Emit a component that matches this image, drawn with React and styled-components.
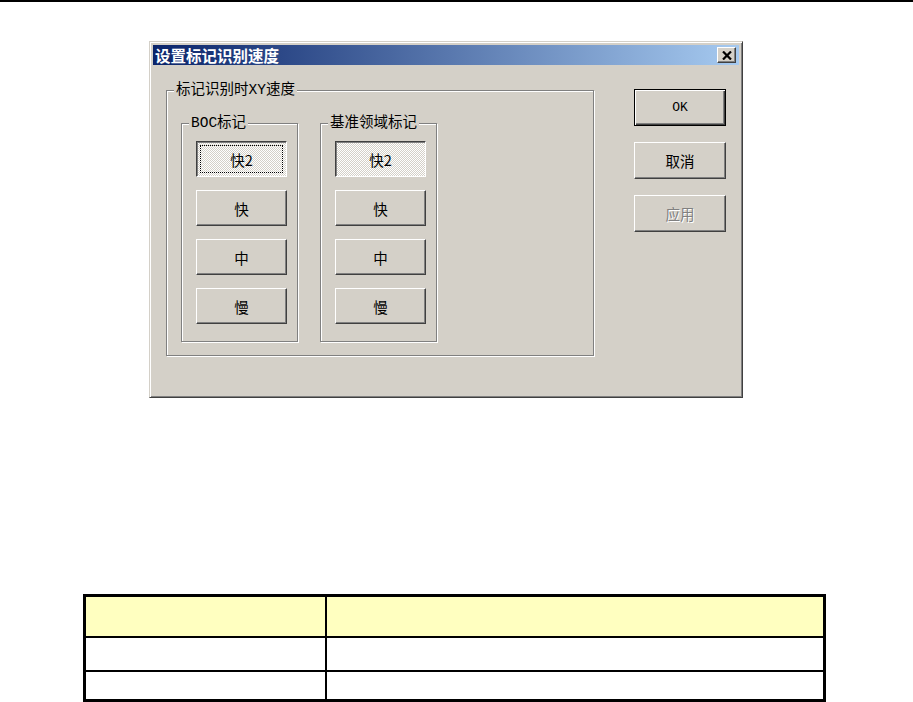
import React from 'react';
import styled, { createGlobalStyle, css } from 'styled-components';

const GlobalStyle = createGlobalStyle`
  html, body {
    margin: 0;
    padding: 0;
    background: #ffffff;
  }
  body {
    font-family: "Noto Sans CJK SC", "Liberation Sans", sans-serif;
  }
`;

const Page = styled.div`
  width: 913px;
  height: 702px;
  overflow: hidden;
  display: flex;
  flex-direction: column;
`;

const TopRule = styled.div`
  height: 2px;
  background: #000;
`;

const Dialog = styled.div`
  box-sizing: border-box;
  width: 594px;
  height: 357px;
  margin: 39px 0 0 149px;
  padding: 2px;
  background: #d4d0c8;
  border: 1px solid;
  border-color: #d4d0c8 #404040 #404040 #d4d0c8;
  box-shadow: inset 1px 1px 0 #ffffff, inset -1px -1px 0 #808080;
  display: flex;
  flex-direction: column;
`;

const TitleBar = styled.div`
  height: 20px;
  margin: 1px;
  display: flex;
  align-items: center;
  justify-content: space-between;
  padding: 0 3px 0 2px;
  background: linear-gradient(to right, #0a246a, #a6caf0);
`;

const Title = styled.span`
  color: #ffffff;
  font-weight: bold;
  font-size: 15.5px;
  line-height: 20px;
`;

const bevel = css`
  box-sizing: border-box;
  background: #d4d0c8;
  border: 1px solid;
  border-color: #ffffff #404040 #404040 #ffffff;
  box-shadow: inset -1px -1px 0 #808080;
`;

const CloseBox = styled.div`
  ${bevel};
  width: 19px;
  height: 16px;
  display: flex;
  align-items: center;
  justify-content: center;
`;

const Body = styled.div`
  display: flex;
  padding: 24px 0 0 14px;
  gap: 40px;
`;

const Group = styled.div`
  position: relative;
  box-sizing: border-box;
  width: ${p => p.$w}px;
  height: ${p => p.$h}px;
  padding: ${p => p.$pad};
  border: 1px solid #808080;
  box-shadow: inset 1px 1px 0 #ffffff, 1px 1px 0 #ffffff;
  display: flex;
  gap: ${p => p.$gap || 0}px;
`;

const Caption = styled.span`
  position: absolute;
  top: -10px;
  left: 7px;
  padding: 0 2px;
  background: #d4d0c8;
  color: #000;
  font-family: "Liberation Mono", "Noto Sans CJK SC", monospace;
  font-size: 14.5px;
  line-height: 18px;
  white-space: nowrap;
`;

const ButtonStack = styled.div`
  display: flex;
  flex-direction: column;
  gap: ${p => p.$gap}px;
`;

const Button = styled.div`
  ${bevel};
  width: ${p => p.$w || 91}px;
  height: ${p => p.$h || 36}px;
  display: flex;
  align-items: center;
  justify-content: center;
  font-size: 14.5px;
  color: #000;

  ${p => p.$pressed && css`
    border-color: #404040 #ffffff #ffffff #404040;
    box-shadow: inset 1px 1px 0 #808080;
    background-color: #ffffff;
    background-image: conic-gradient(#d4d0c8 25%, #ffffff 0 50%, #d4d0c8 0 75%, #ffffff 0);
    background-size: 2px 2px;
  `}

  ${p => p.$focus && css`
    outline: 1px dotted #000;
    outline-offset: -5px;
  `}

  ${p => p.$default && css`
    border: 1px solid #000;
    box-shadow: inset 1px 1px 0 #ffffff, inset -1px -1px 0 #404040, inset -2px -2px 0 #808080;
  `}

  ${p => p.$disabled && css`
    color: #808080;
    text-shadow: 1px 1px 0 #ffffff;
  `}
`;

const Mono = styled.span`
  font-family: "Liberation Mono", monospace;
  font-size: 13px;
`;

const SideButtons = styled.div`
  display: flex;
  flex-direction: column;
  gap: 16px;
  margin-top: -1px;
`;

const Table = styled.div`
  box-sizing: border-box;
  width: 743px;
  margin: 196px 0 0 83px;
  border: 3px solid #000;
  display: grid;
  grid-template-columns: 241px 1fr;
`;

const Cell = styled.div`
  height: ${p => p.$h}px;
  background: ${p => (p.$head ? '#ffffc0' : '#ffffff')};
  border-bottom: ${p => (p.$last ? 0 : 2)}px solid #000;
  border-right: ${p => (p.$left ? 2 : 0)}px solid #000;
`;

const speeds = ['快2', '快', '中', '慢'];

function SpeedGroup({ label, focus }) {
  return (
    <Group $w={117} $h={219} $pad="17px 0 0 14px">
      <Caption>{label}</Caption>
      <ButtonStack $gap={13}>
        {speeds.map((s, i) => (
          <Button key={s} $pressed={i === 0} $focus={focus && i === 0}>
            {s}
          </Button>
        ))}
      </ButtonStack>
    </Group>
  );
}

const rows = [
  { h: 39, head: true },
  { h: 32 },
  { h: 27, last: true },
];

export default function App() {
  return (
    <Page>
      <GlobalStyle />
      <TopRule />
      <Dialog>
        <TitleBar>
          <Title>设置标记识别速度</Title>
          <CloseBox>
            <svg width="10" height="9" viewBox="0 0 10 9">
              <path d="M1 0.5 L9 8.5 M9 0.5 L1 8.5" stroke="#000" strokeWidth="2.2" />
            </svg>
          </CloseBox>
        </TitleBar>
        <Body>
          <Group $w={428} $h={266} $pad="32px 0 0 14px" $gap={22}>
            <Caption>标记识别时XY速度</Caption>
            <SpeedGroup label="BOC标记" focus />
            <SpeedGroup label="基准领域标记" />
          </Group>
          <SideButtons>
            <Button $w={92} $h={37} $default>
              <Mono>OK</Mono>
            </Button>
            <Button $w={92} $h={37}>取消</Button>
            <Button $w={92} $h={37} $disabled>应用</Button>
          </SideButtons>
        </Body>
      </Dialog>
      <Table>
        {rows.map((r, i) => (
          <React.Fragment key={i}>
            <Cell $h={r.h} $head={r.head} $last={r.last} $left />
            <Cell $h={r.h} $head={r.head} $last={r.last} />
          </React.Fragment>
        ))}
      </Table>
    </Page>
  );
}
